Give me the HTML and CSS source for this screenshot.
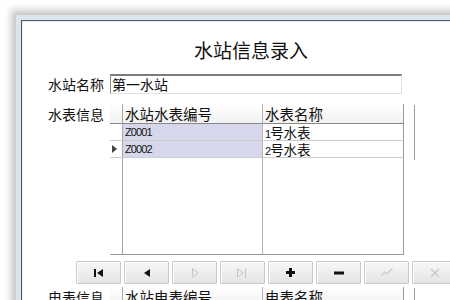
FILE: index.html
```html
<!DOCTYPE html>
<html lang="zh-CN">
<head>
    <meta charset="UTF-8">
    <title>水站信息录入</title>
    <link rel="stylesheet" href="styles.css">
</head>
<body>
    <div class="window">
        <div class="client">
            <h1 class="title">水站信息录入</h1>

            <!-- Station name -->
            <div class="field">
                <span class="label">水站名称</span>
                <div class="input">第一水站</div>
            </div>

            <!-- Water meter grid -->
            <div class="section">
                <span class="label">水表信息</span>
                <div class="grid">
                    <div class="hd ind"></div>
                    <div class="hd">水站水表编号</div>
                    <div class="hd">水表名称</div>

                    <div class="ind"></div>
                    <div class="cell key">Z0001</div>
                    <div class="cell"><span class="num">1</span>号水表</div>

                    <div class="ind cur">
                        <svg width="5" height="8" viewBox="0 0 5 8"><path d="M0 0 L5 4 L0 8 Z" fill="#444"/></svg>
                    </div>
                    <div class="cell key">Z0002</div>
                    <div class="cell"><span class="num">2</span>号水表</div>

                    <div class="ind fill"></div>
                    <div class="fill"></div>
                    <div class="fill"></div>
                </div>
                <div class="edge"></div>
            </div>

            <!-- Navigator -->
            <div class="nav">
                <button class="btn"><svg width="10" height="8" viewBox="0 0 10 8"><rect x="0" y="0" width="2" height="8" fill="#111"/><path d="M9 0 L3 4 L9 8 Z" fill="#111"/></svg></button>
                <button class="btn"><svg width="8" height="8" viewBox="0 0 8 8"><path d="M7 0 L1 4 L7 8 Z" fill="#111"/></svg></button>
                <button class="btn"><svg width="8" height="10" viewBox="0 0 8 10"><path d="M1.5 9.5 V0.5 L7 5 L2.5 8.5" fill="none" stroke="#c4c4c4"/></svg></button>
                <button class="btn"><svg width="11" height="10" viewBox="0 0 11 10"><path d="M0.5 9.5 V0.5 L6 5 L1.5 8.5 M8.5 0.5 V9.5" fill="none" stroke="#c4c4c4"/></svg></button>
                <button class="btn"><svg width="9" height="9" viewBox="0 0 9 9"><path d="M3 0 H6 V3 H9 V6 H6 V9 H3 V6 H0 V3 H3 Z" fill="#111"/></svg></button>
                <button class="btn"><svg width="10" height="4" viewBox="0 0 10 4"><rect x="0" y="0.5" width="10" height="3" fill="#111"/></svg></button>
                <button class="btn"><svg width="12" height="9" viewBox="0 0 12 9"><path d="M0.5 8 L3.5 4 L5.5 6 L11.5 0.5" fill="none" stroke="#c8c8c8" stroke-width="1.2"/></svg></button>
                <button class="btn"><svg width="10" height="10" viewBox="0 0 10 10"><path d="M1 1 L9 9 M9 1 L1 9" fill="none" stroke="#c8c8c8" stroke-width="1.4"/></svg></button>
            </div>

            <!-- Electric meter grid -->
            <div class="section">
                <span class="label">电表信息</span>
                <div class="grid">
                    <div class="hd ind"></div>
                    <div class="hd">水站电表编号</div>
                    <div class="hd">电表名称</div>

                    <div class="ind fill"></div>
                    <div class="fill"></div>
                    <div class="fill"></div>
                </div>
                <div class="edge"></div>
            </div>
        </div>
    </div>
</body>
</html>
```

FILE: styles.css
```css
body {
    margin: 0;
    background: #ffffff;
    font-family: "Noto Sans CJK SC", sans-serif;
    overflow: hidden;
}

/* Window frame */
.window {
    margin: 15px 0 0 16px;
    width: 520px;
    height: 400px;
    background: #dbe5ee;
    padding: 5px 0 0 5px;
    box-shadow: -2px -2px 7px 3px rgba(0, 0, 0, 0.22);
}
.client {
    height: 100%;
    background: #fff;
    border-top: 1px solid #4f5a66;
    border-left: 1px solid #4f5a66;
    box-shadow: inset 1px 1px 0 #e9eef3;
    padding: 19px 0 0 26px;
    overflow: hidden;
    box-sizing: border-box;
}

.title {
    width: 406px;
    margin: 0;
    font-size: 19px;
    line-height: 19px;
    font-weight: normal;
    text-align: center;
    color: #111;
}

.label {
    width: 62px;
    flex: none;
    font-size: 14px;
    line-height: 20px;
    color: #111;
}

/* Station name field */
.field {
    display: flex;
    margin-top: 15px;
}
.input {
    width: 292px;
    height: 20px;
    box-sizing: border-box;
    border: 1px solid #e0e0e0;
    border-top: 2px solid #7c7c7c;
    border-left-color: #8a8a8a;
    padding-left: 1px;
    font-size: 14px;
    line-height: 16px;
    color: #111;
}

/* Data grids */
.section {
    display: flex;
    align-items: flex-start;
    margin-top: 10px;
}
.grid {
    display: grid;
    grid-template-columns: 13px 140px 141px;
    grid-template-rows: 20px 17px 17px 96px;
    border-bottom: 1px solid #9a9a9a;
}
.grid > div {
    box-sizing: border-box;
    border-right: 1px solid #b4b4b4;
    border-bottom: 1px solid #cdcdcd;
    overflow: hidden;
    white-space: nowrap;
}
.grid > div:nth-child(3n) { border-right-color: #9a9a9a; }
.grid .hd {
    background: linear-gradient(#ffffff, #f1f1f1);
    border-bottom-color: #888;
    padding-left: 2px;
    font-size: 14.5px;
    line-height: 19px;
    color: #111;
}
.grid .ind {
    padding: 0;
    border-right-color: #a8a8a8;
}
.grid .cur {
    display: flex;
    align-items: center;
    padding-left: 2px;
}
.grid .cell {
    padding-left: 2px;
    font-size: 13.5px;
    line-height: 16px;
    color: #111;
}
.grid .key {
    background: #d7d7ec;
    font-family: "Liberation Sans", sans-serif;
    font-size: 11px;
    letter-spacing: -0.9px;
}
.num {
    font-family: "Liberation Sans", sans-serif;
    font-size: 11px;
    letter-spacing: -1px;
}
.grid .fill { border-bottom: none; }
.grid .ind.fill { border-right-color: #a8a8a8; }

.edge {
    width: 0;
    height: 55px;
    margin: 1px 0 0 10px;
    border-left: 1px solid #9a9a9a;
}

/* Navigator buttons */
.nav {
    display: flex;
    gap: 3px;
    margin: 6px 0 0 28px;
}
.btn {
    flex: none;
    width: 45px;
    height: 23px;
    padding: 0;
    display: flex;
    align-items: center;
    justify-content: center;
    border: 1px solid #c9c9c9;
    border-radius: 1px;
    background: linear-gradient(#f7f7f7, #e4e4e4);
    box-shadow: inset 1px 1px 0 #ffffff;
}
.nav + .section { margin-top: 3px; }
```
